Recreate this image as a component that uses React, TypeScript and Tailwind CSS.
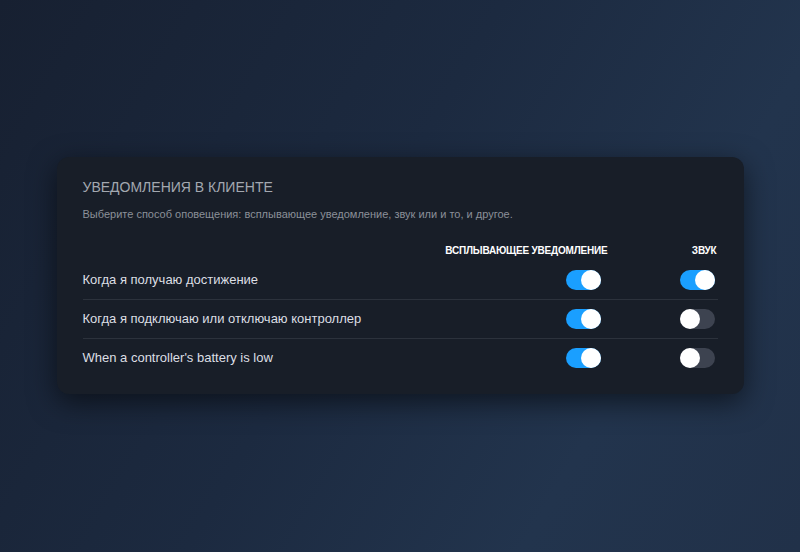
import React, { useState } from 'react';

type Row = { id: string; label: string; toast: boolean; sound: boolean };

const initialRows: Row[] = [
  { id: 'ach', label: 'Когда я получаю достижение', toast: true, sound: true },
  { id: 'ctrl', label: 'Когда я подключаю или отключаю контроллер', toast: true, sound: false },
  { id: 'bat', label: "When a controller's battery is low", toast: true, sound: false },
];

function Toggle({ on, onChange }: { on: boolean; onChange: () => void }) {
  return (
    <button
      onClick={onChange}
      className={`relative h-[20px] w-[35px] rounded-full ${on ? 'bg-[#1a9fff]' : 'bg-[#3d4350]'}`}
    >
      <span
        className={`absolute top-0 h-[20px] w-[20px] rounded-full bg-white ${on ? 'right-0' : 'left-0'}`}
      />
    </button>
  );
}

export default function App() {
  const [rows, setRows] = useState<Row[]>(initialRows);

  const flip = (id: string, key: 'toast' | 'sound') =>
    setRows((prev) => prev.map((r) => (r.id === id ? { ...r, [key]: !r[key] } : r)));

  return (
    <div
      className="flex h-[552px] w-[800px] items-start justify-center bg-[linear-gradient(120deg,#172031_0%,#1c2a40_45%,#22344d_75%,#213149_100%)] pt-[157px] font-['Liberation_Sans',Arial,sans-serif]"
    >
      <div className="w-[687px] rounded-[12px] bg-[#181e28] px-[26px] pb-[17px] pt-[22px] shadow-[0_8px_28px_rgba(0,0,0,0.55)]">
        <h2 className="text-[14px] leading-[17px] uppercase text-[#a3a8b0]">Уведомления в клиенте</h2>
        <p className="mt-[12px] text-[11px] leading-[13px] text-[#8b9099]">
          Выберите способ оповещения: всплывающее уведомление, звук или и то, и другое.
        </p>

        <div className="mt-[24px] grid grid-cols-[1fr_170px_110px] items-center text-[10px] font-bold leading-[12px] tracking-[-0.2px] text-white">
          <span />
          <span className="text-right">ВСПЛЫВАЮЩЕЕ УВЕДОМЛЕНИЕ</span>
          <span className="pr-[1px] text-right">ЗВУК</span>
        </div>

        <div className="mt-[3px]">
          {rows.map((r, i) => (
            <div
              key={r.id}
              className={`grid h-[39px] grid-cols-[1fr_170px_110px] items-center ${i > 0 ? 'border-t border-[#2c323c]' : ''}`}
            >
              <span className="text-[13px] text-[#dcdfe4]">{r.label}</span>
              <div className="flex justify-end pr-[7px]">
                <Toggle on={r.toast} onChange={() => flip(r.id, 'toast')} />
              </div>
              <div className="flex justify-end pr-[3px]">
                <Toggle on={r.sound} onChange={() => flip(r.id, 'sound')} />
              </div>
            </div>
          ))}
        </div>
      </div>
    </div>
  );
}
